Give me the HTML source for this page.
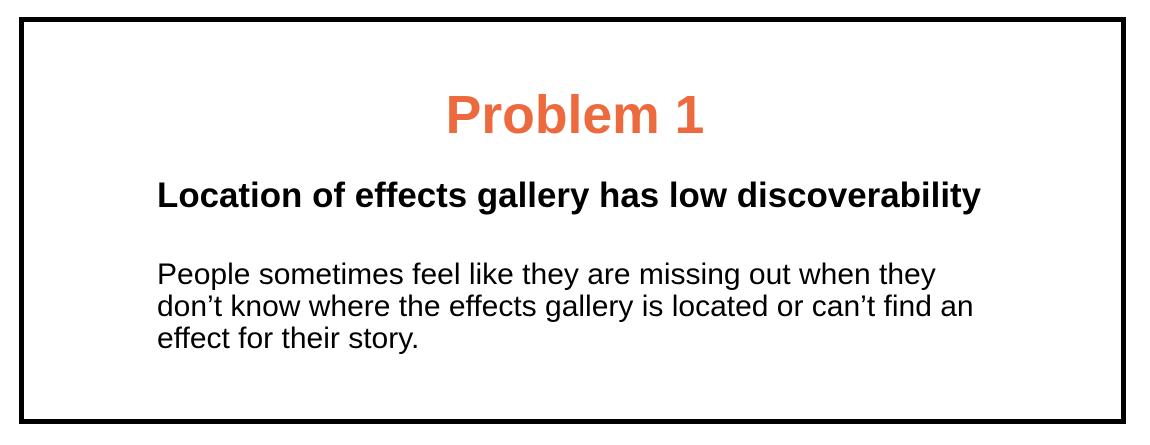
<!DOCTYPE html>
<html><head><meta charset="utf-8"><style>
html,body{margin:0;padding:0;background:#fff;width:1150px;height:445px;overflow:hidden;font-family:"Liberation Sans",Arial,sans-serif;}
.box{position:absolute;left:19px;top:17px;width:1097px;height:397px;border:5px solid #000;}
.t{position:absolute;left:0;width:1150px;text-align:center;top:89px;font-size:53.5px;line-height:1;font-weight:bold;color:#EC6A3E;}
.s{position:absolute;left:157px;top:179px;font-size:34.9px;line-height:1;font-weight:bold;color:#000;white-space:nowrap;}
.b{position:absolute;left:157px;top:259px;font-size:30px;line-height:32px;color:#000;white-space:nowrap;}
</style></head><body>
<div class="box"></div>
<div class="t">Problem 1</div>
<div class="s">Location of effects gallery has low discoverability</div>
<div class="b">People sometimes feel like they are missing out when they<br>don’t know where the effects gallery is located or can’t find an<br>effect for their story.</div>
</body></html>
